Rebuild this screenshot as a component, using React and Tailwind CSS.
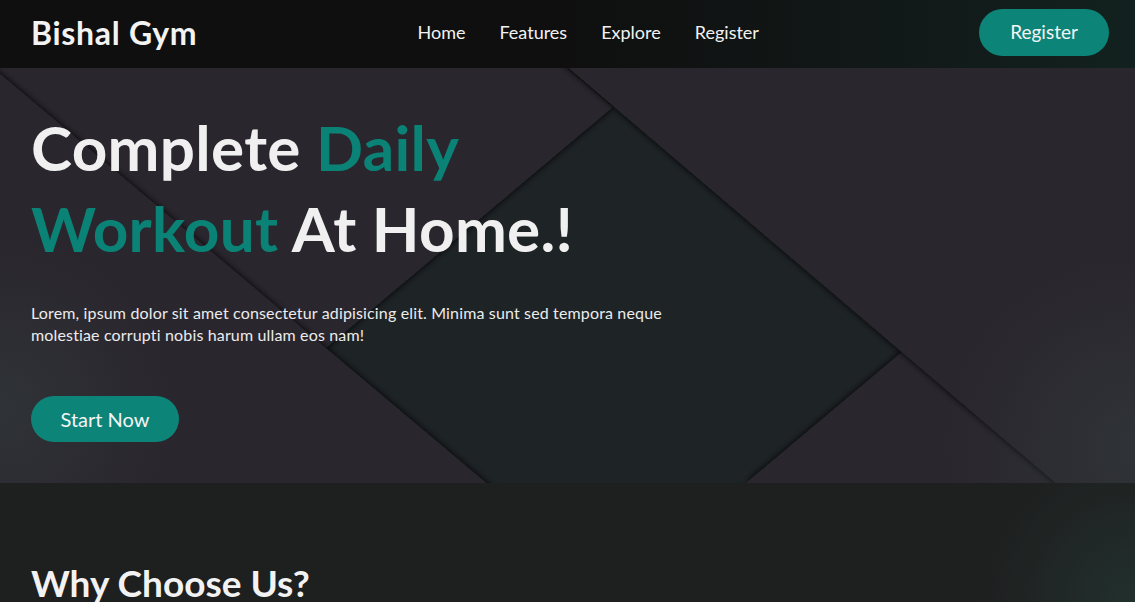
import React from "react";

function HeroBackground() {
  return (
    <svg
      className="absolute inset-0 h-full w-full"
      viewBox="0 0 1135 415"
      preserveAspectRatio="none"
      aria-hidden="true"
    >
      <defs>
        <filter id="sh" x="-20%" y="-20%" width="140%" height="140%">
          <feDropShadow dx="0" dy="0" stdDeviation="3.5" floodColor="#000" floodOpacity="1" />
        </filter>
        <radialGradient id="glowL" cx="0" cy="340" r="170" gradientUnits="userSpaceOnUse">
          <stop offset="0" stopColor="#34403f" stopOpacity="0.5" />
          <stop offset="1" stopColor="#34403f" stopOpacity="0" />
        </radialGradient>
        <radialGradient id="glowR" cx="1135" cy="380" r="190" gradientUnits="userSpaceOnUse">
          <stop offset="0" stopColor="#34403f" stopOpacity="0.5" />
          <stop offset="1" stopColor="#34403f" stopOpacity="0" />
        </radialGradient>
      </defs>
      <rect x="0" y="0" width="1135" height="415" fill="#1e2326" />
      <polygon points="903,283 1061,415 746,415" fill="#29282d" filter="url(#sh)" />
      <polygon points="-20,-20 567,-20 567,0 613,39 326,280 -20,6" fill="#29282d" filter="url(#sh)" />
      <polygon points="545,-20 1160,-20 1160,440 1085,440" fill="#29282d" filter="url(#sh)" />
      <polygon points="-20,-11 516,440 -20,440" fill="#29282d" filter="url(#sh)" />
      <rect x="0" y="0" width="1135" height="415" fill="url(#glowL)" />
      <rect x="0" y="0" width="1135" height="415" fill="url(#glowR)" />
    </svg>
  );
}

export default function App() {
  const font = { fontFamily: "Lato, 'Noto Sans', sans-serif" };
  return (
    <div className="w-full min-h-[602px] bg-[#1e1f1f] text-white" style={font}>
      <header className="flex h-[68px] items-center justify-between bg-gradient-to-r from-[#0f0f0f] via-[#0f0f0f] to-[#12211f] pb-[3px] pl-[31px] pr-[26px]">
        <div className="text-[32px] font-bold leading-none tracking-[0.7px] text-[#f3f3f3]">Bishal Gym</div>
        <nav className="flex items-center gap-[34px] text-[18px] text-[#f2f2f2]">
          <a href="#">Home</a>
          <a href="#">Features</a>
          <a href="#">Explore</a>
          <a href="#">Register</a>
        </nav>
        <button className="h-[47px] w-[130px] rounded-full bg-[#0d8478] text-[19px] text-[#f4f4f4]">Register</button>
      </header>

      <section className="relative h-[415px] overflow-hidden">
        <HeroBackground />
        <div className="relative flex flex-col items-start pl-[31px] pt-[39px]">
          <h1 className="text-[62px] font-bold leading-[81px] tracking-[0.3px] text-[#f0f0f0]">
            Complete <span className="text-[#0b8276]">Daily</span>
            <br />
            <span className="text-[#0b8276]">Workout</span> At Home.!
          </h1>
          <p className="mt-[33px] whitespace-nowrap text-[16px] leading-[22px] tracking-[0.15px] text-[#ececec]">
            Lorem, ipsum dolor sit amet consectetur adipisicing elit. Minima sunt sed tempora neque
            <br />
            molestiae corrupti nobis harum ullam eos nam!
          </p>
          <button className="mt-[50px] h-[46px] w-[148px] rounded-full bg-[#0d8478] text-[20px] text-[#f4f4f4]">Start Now</button>
        </div>
      </section>

      <section className="relative h-[119px] overflow-hidden bg-[radial-gradient(circle_at_100%_100%,#22302d_0%,#1e1f1f_160px)] pl-[31px] pt-[78px]">
        <h2 className="text-[37px] font-bold leading-[43px] text-[#f2f2f2]">Why Choose Us?</h2>
      </section>
    </div>
  );
}
